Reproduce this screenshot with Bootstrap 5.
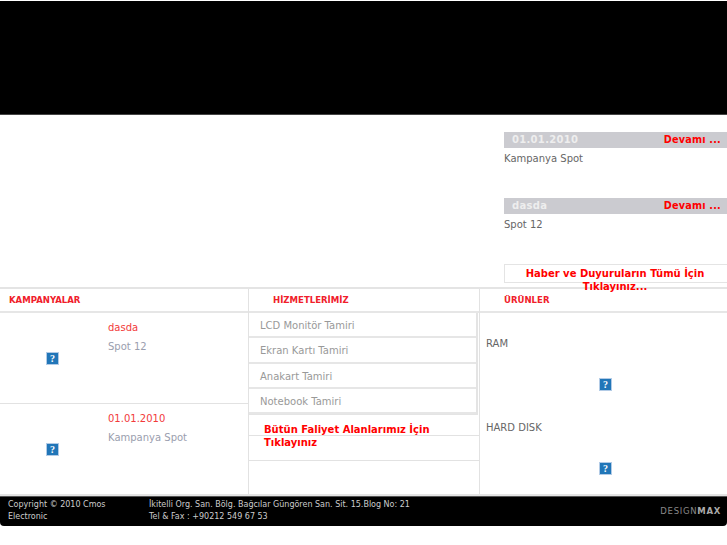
<!DOCTYPE html>
<html lang="en">
<head>
  <meta charset="UTF-8" />
  <meta name="viewport" content="width=device-width, initial-scale=1.0"/>
  <title>Cmos Electronic</title>
  <link rel="stylesheet" href="https://cdn.jsdelivr.net/npm/bootstrap@5.3.0/dist/css/bootstrap.min.css"/>
  <style>
    body { font-family: "DejaVu Sans", sans-serif; font-size: 10px; color: #666; background: #fff; overflow: hidden; }
    a { text-decoration: none; }
    .site-head { height: 114px; margin-top: 1px; background: #000; border-bottom: 1px solid #444; }
    .top-area { height: 172px; padding: 17px 0 0 504px; }
    .spot-bar { height: 16px; padding: 0 6px 0 8px; background: #cbcbd0; color: #eee; font-size: 10px; line-height: 15px; letter-spacing: .3px; }
    .spot-bar b { font-weight: 600; }
    .spot-more { color: #f00; font-size: 9.7px; font-weight: 700; letter-spacing: .2px; }
    .spot-text { height: 50px; padding-top: 3px; line-height: 15px; color: #666; }
    .all-news { display: block; height: 19px; border: 1px solid #e4e4e4; border-right: 0; color: #f00; font-weight: 700; text-align: center; line-height: 13px; padding: 2px 21px 0 19px; }
    .main-grid { height: 209px; border-top: 2px solid #e4e4e4; border-bottom: 2px solid #e4e4e4; }
    .col-a { width: 249px; border-right: 1px solid #e2e2e2; }
    .col-b { width: 231px; border-right: 1px solid #e2e2e2; }
    .col-c { width: 247px; }
    .sec-title { height: 24px; border-bottom: 2px solid #e6e6e6; color: #f0202a; font-family: "DejaVu Sans Condensed", "DejaVu Sans", sans-serif; font-size: 9.5px; font-weight: 700; line-height: 22px; }
    .col-a .sec-title { padding-left: 9px; }
    .col-b .sec-title { padding-left: 24px; }
    .col-c .sec-title { padding-left: 24px; }
    .camp-row { height: 91px; border-bottom: 1px solid #e2e2e2; }
    .camp-row + .camp-row { height: 90px; border-bottom: 0; }
    .camp-pic { width: 108px; padding: 39px 0 0 46px; }
    .camp-info { padding-top: 6px; }
    .camp-name { color: #f23a3a; line-height: 17px; }
    .camp-desc { margin-top: 2px; color: #9a9eae; line-height: 17px; }
    .broken-pic { display: block; width: 13px; height: 13px; }
    .svc-list { height: 102px; margin-right: 1px; border-right: 2px solid #e4e4e4; border-bottom: 2px solid #e4e4e4; }
    .svc-item { height: 25.3px; padding-left: 11px; border-bottom: 2px solid #e6e6e6; color: #999; line-height: 25px; }
    .svc-more { position: relative; }
    .svc-line { height: 21px; border-bottom: 1px solid #e2e2e2; }
    .svc-line + .svc-line { height: 25px; }
    .svc-link { position: absolute; top: 8px; left: 15px; width: 190px; color: #f00; font-weight: 700; line-height: 13px; }
    .prod-item { height: 84px; padding: 23px 0 0 6px; line-height: 15px; color: #666; }
    .prod-pic { margin: 27px 0 0 113px; }
    .site-foot { height: 30px; background: #000; border-top: 1px solid #555; border-radius: 0 0 4px 4px; color: #ccc; font-size: 8px; line-height: 11.5px; padding: 2px 6px 0 8px; }
    .foot-copy { width: 141px; padding-right: 36px; }
    .foot-brand { color: #888; font-size: 8.5px; letter-spacing: .7px; padding-top: 7px; }
    .foot-brand b { color: #aaa; }
  </style>
</head>
<body>
  <svg width="0" height="0" class="d-none">
    <symbol id="noPic" viewBox="0 0 13 13">
      <rect x=".5" y=".5" width="12" height="12" fill="#2176b8" stroke="#b2cbe6"/>
      <text x="6.5" y="10" text-anchor="middle" font-family="Liberation Serif, serif" font-size="10" font-weight="700" fill="#fff">?</text>
    </symbol>
  </svg>

  <div class="site-head"></div>

  <div class="top-area">
    <div class="spot-bar d-flex justify-content-between"><b>01.01.2010</b><a class="spot-more" href="#">Devamı ...</a></div>
    <div class="spot-text">Kampanya Spot</div>
    <div class="spot-bar d-flex justify-content-between"><b>dasda</b><a class="spot-more" href="#">Devamı ...</a></div>
    <div class="spot-text">Spot 12</div>
    <a class="all-news" href="#">Haber ve Duyuruların Tümü İçin Tıklayınız...</a>
  </div>

  <div class="main-grid d-flex">
    <div class="col-a">
      <div class="sec-title">KAMPANYALAR</div>
      <div class="camp-row d-flex">
        <div class="camp-pic"><svg class="broken-pic"><use href="#noPic"/></svg></div>
        <div class="camp-info"><div class="camp-name">dasda</div><div class="camp-desc">Spot 12</div></div>
      </div>
      <div class="camp-row d-flex">
        <div class="camp-pic"><svg class="broken-pic"><use href="#noPic"/></svg></div>
        <div class="camp-info"><div class="camp-name">01.01.2010</div><div class="camp-desc">Kampanya Spot</div></div>
      </div>
    </div>

    <div class="col-b">
      <div class="sec-title">HİZMETLERİMİZ</div>
      <div class="svc-list">
        <div class="svc-item">LCD Monitör Tamiri</div>
        <div class="svc-item">Ekran Kartı Tamiri</div>
        <div class="svc-item">Anakart Tamiri</div>
        <div class="svc-item">Notebook Tamiri</div>
      </div>
      <div class="svc-more">
        <div class="svc-line"></div>
        <div class="svc-line"></div>
        <a class="svc-link" href="#">Bütün Faliyet Alanlarımız İçin Tıklayınız</a>
      </div>
    </div>

    <div class="col-c">
      <div class="sec-title">ÜRÜNLER</div>
      <div class="prod-item">RAM<svg class="broken-pic prod-pic"><use href="#noPic"/></svg></div>
      <div class="prod-item">HARD DISK<svg class="broken-pic prod-pic"><use href="#noPic"/></svg></div>
    </div>
  </div>

  <div class="site-foot d-flex">
    <div class="foot-copy">Copyright &copy; 2010 Cmos Electronic</div>
    <div class="flex-grow-1">İkitelli Org. San. Bölg. Bağcılar Güngören San. Sit. 15.Blog No: 21<br>Tel &amp; Fax : +90212 549 67 53</div>
    <div class="foot-brand">DESIGN<b>MAX</b></div>
  </div>
  <script src="https://cdn.jsdelivr.net/npm/bootstrap@5.3.0/dist/js/bootstrap.bundle.min.js"></script>
</body>
</html>
